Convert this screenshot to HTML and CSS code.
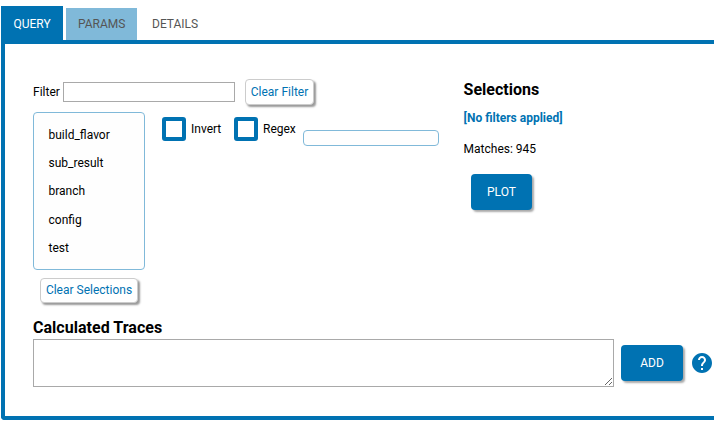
FILE: index.html
```html
<!DOCTYPE html>
<html lang="en">
<head>
<meta charset="utf-8">
<title>Query</title>
<link rel="stylesheet" href="styles.css">
</head>
<body>
<nav class="tabs">
  <button class="tab selected">QUERY</button>
  <button class="tab tinted">PARAMS</button>
  <button class="tab">DETAILS</button>
</nav>
<main class="panel">
  <div class="top">
    <section class="query">
      <div class="filter">
        <label for="filter">Filter</label>
        <input id="filter" type="text">
        <button class="action">Clear Filter</button>
      </div>
      <div class="choices">
        <div class="keys">
          <ul class="list">
            <li>build_flavor</li>
            <li>sub_result</li>
            <li>branch</li>
            <li>config</li>
            <li>test</li>
          </ul>
          <button class="action clear-selections">Clear Selections</button>
        </div>
        <label class="check"><span class="box"></span>Invert</label>
        <label class="check regex"><span class="box"></span>Regex</label>
        <div class="values"></div>
      </div>
    </section>
    <section class="selections">
      <h3>Selections</h3>
      <p class="summary">[No filters applied]</p>
      <p class="matches">Matches: 945</p>
      <button class="primary plot">PLOT</button>
    </section>
  </div>
  <h3 class="traces-title">Calculated Traces</h3>
  <div class="traces">
    <textarea aria-label="Formula"></textarea>
    <button class="primary add">ADD</button>
    <svg class="help" viewBox="0 0 24 24" role="img" aria-label="Help"><path d="M12 2C6.48 2 2 6.48 2 12s4.48 10 10 10 10-4.48 10-10S17.52 2 12 2zm1 17h-2v-2h2v2zm2.07-7.75l-.9.92C13.45 12.9 13 13.5 13 15h-2v-.5c0-1.1.45-2.1 1.17-2.83l1.24-1.26c.37-.36.59-.86.59-1.41 0-1.1-.9-2-2-2s-2 .9-2 2H8c0-2.21 1.79-4 4-4s4 1.79 4 4c0 .88-.36 1.68-.93 2.25z"/></svg>
  </div>
</main>
</body>
</html>
```
FILE: styles.css
```css
* { box-sizing: border-box; }
body {
  margin: 0;
  padding: 6px 0 0 1px;
  overflow: hidden;
  background: #fff;
  color: #000;
  font: 12px/16px Roboto, sans-serif;
}
button, input, textarea { margin: 0; font: inherit; border-radius: 0; outline: 0; }
h3, p, ul { margin: 0; padding: 0; }
h3 { font-size: 16px; line-height: 20px; font-weight: 700; }

.tabs { display: flex; align-items: flex-end; height: 34px; }
.tab {
  height: 32px;
  margin-right: 3px;
  padding: 0 12px;
  border: 0;
  background: transparent;
  color: #555;
}
.tab.selected { width: 62px; height: 34px; padding-top: 2px; background: #0072b2; color: #fff; }
.tab.tinted { width: 71px; background: #80b9d9; }

.panel {
  height: 380px;
  padding: 35px 0 0 28px;
  border: 4px solid #0072b2;
  border-right: 0;
  border-radius: 0 0 0 4px;
}
.top { display: flex; height: 238px; }
.query { width: 430.6px; }
.filter { display: flex; align-items: center; height: 26px; }
.filter label { width: 30px; }
.filter input { width: 172px; height: 20px; border: 1px solid #a9a9a9; background: #fff; }
.action {
  height: 26px;
  padding: 0 0 1px;
  border: 1px solid #ccc;
  border-radius: 4px;
  background: #fff;
  color: #0072b2;
  box-shadow: 2px 2px 2px #999;
}
.filter .action { width: 69px; margin-left: 10px; }
.choices { display: flex; align-items: flex-start; padding-top: 7px; }
.keys { width: 129px; }
.list {
  width: 112px;
  height: 158px;
  padding: 8px 0 0 14.5px;
  border: 1px solid #80b9d9;
  border-radius: 4px;
  background: #fefefe;
  list-style: none;
}
.list li { height: 28.2px; line-height: 28.2px; }
.clear-selections { display: block; width: 98px; height: 25px; margin: 8px 0 0 7px; padding-bottom: 2px; }
.check { display: flex; align-items: center; gap: 5px; width: 72px; margin-top: 5px; }
.check.regex { width: 69px; }
.box { width: 24px; height: 24px; border: 4px solid #0072b2; border-radius: 3px; }
.values { width: 136px; height: 16px; margin-top: 18px; border: 1px solid #80b9d9; border-radius: 4px; background: #fefefe; }
.selections { padding-top: 1px; }
.summary { margin-top: 10px; color: #0072b2; font-weight: 700; }
.matches { margin-top: 15px; }
.primary {
  height: 36px;
  padding: 0;
  border: 0;
  border-radius: 4px;
  background: #0072b2;
  color: #fff;
  box-shadow: 2px 2px 2px #aaa;
}
.plot { width: 61px; margin: 17px 0 0 7.4px; }
.traces-title { line-height: 22px; letter-spacing: 0.03px; }
.traces { display: flex; align-items: center; }
.traces textarea { width: 581px; height: 48px; border: 1px solid #a9a9a9; background: #fff; resize: both; }
.add { width: 62px; margin: 0 7px; }
.help { width: 24px; height: 24px; fill: #0072b2; }
```
